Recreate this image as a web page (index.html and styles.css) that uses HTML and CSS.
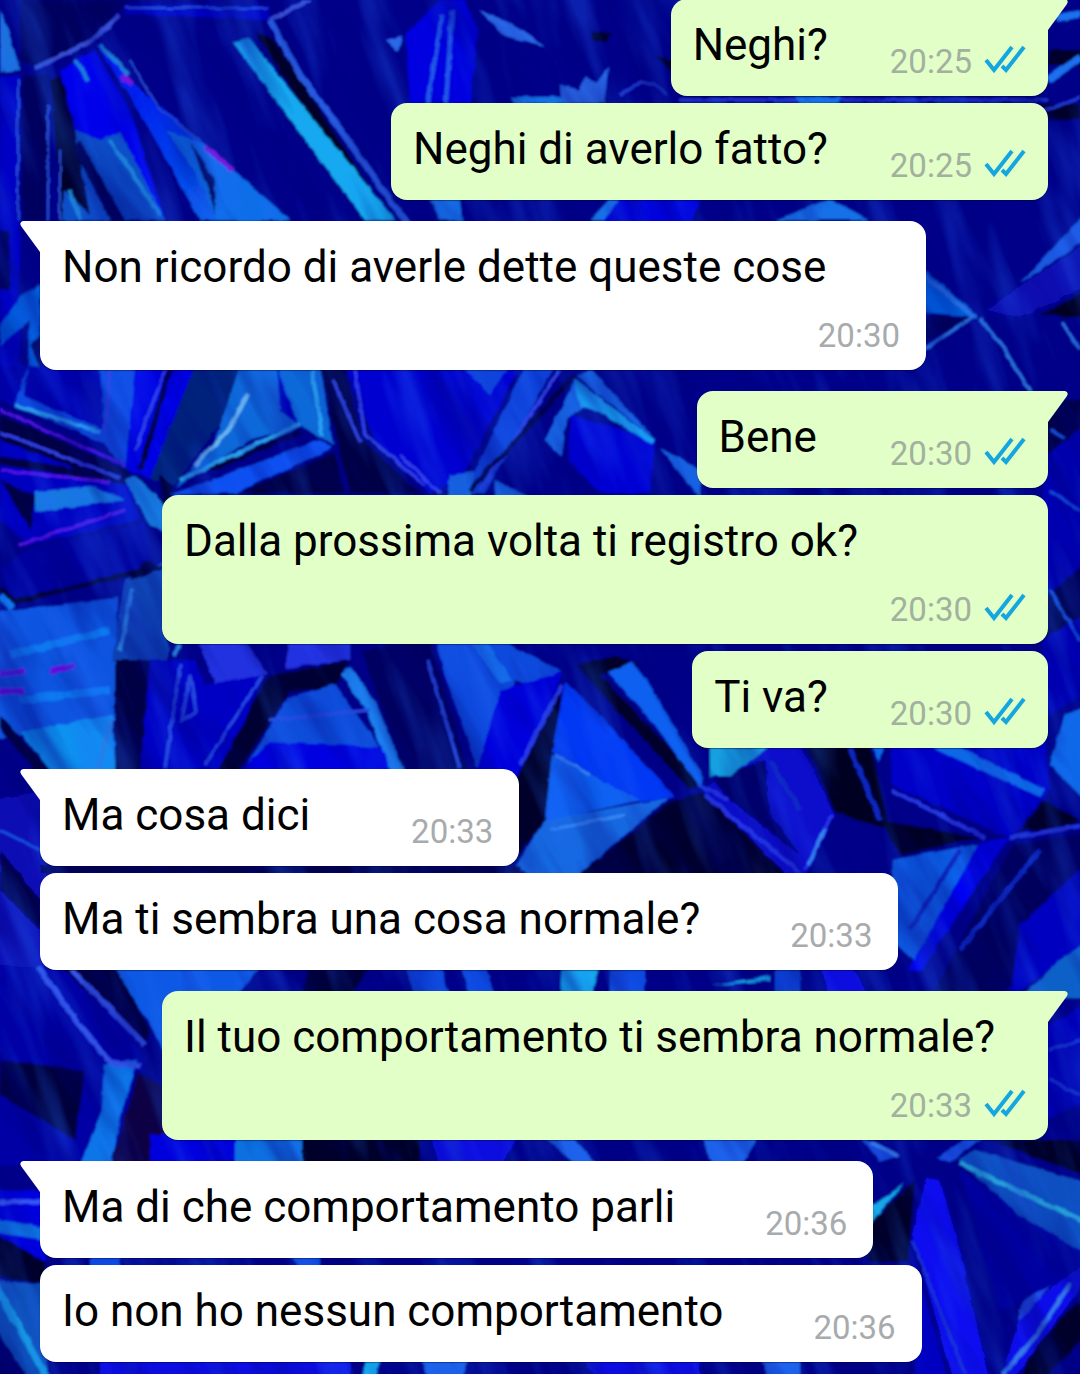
FILE: index.html
```html
<!DOCTYPE html>
<html lang="it">
<head>
    <meta charset="UTF-8" />
    <meta name="viewport" content="width=device-width, initial-scale=1.0" />
    <title>Chat</title>
    <link rel="stylesheet" href="styles.css">
</head>
<body>
    <!-- Shared shapes -->
    <svg class="defs" aria-hidden="true">
        <symbol id="checks" viewBox="0 0 42 28">
            <path d="M2 15 L10 25 L28 2 M18 21 L22 25 L40 2" fill="none" stroke="#14a6de" stroke-width="4" stroke-linejoin="miter" stroke-linecap="butt" />
        </symbol>
        <symbol id="tail-out" viewBox="0 0 21 32">
            <path d="M0 0 H18 Q22 1 20 5 L1 31 H0 Z" />
        </symbol>
        <symbol id="tail-in" viewBox="0 0 21 32">
            <path d="M21 0 H3 Q-1 1 1 5 L20 31 H21 Z" />
        </symbol>
    </svg>

    <main class="chat">
        <!-- Crystal wallpaper -->
        <svg class="wallpaper" viewBox="0 0 1080 1374" preserveAspectRatio="xMidYMin slice" aria-hidden="true">
            <defs>
                <!-- roughens the facet edges -->
                <filter id="soft" x="0" y="0" width="100%" height="100%">
                    <feTurbulence type="fractalNoise" baseFrequency="0.08" numOctaves="2" seed="4" result="noise" />
                    <feDisplacementMap in="SourceGraphic" in2="noise" scale="4" xChannelSelector="R" yChannelSelector="G" />
                    <feGaussianBlur stdDeviation="1" />
                </filter>
                <!-- light and shade inside the facets -->
                <filter id="streaks" x="0" y="0" width="100%" height="100%">
                    <feTurbulence type="fractalNoise" baseFrequency="0.03 0.006" numOctaves="3" seed="9" />
                    <feColorMatrix values="0 0 0 0 0.02  0 0 0 0 0.15  0 0 0 0 1  3 0 0 0 -1.4" />
                </filter>
                <filter id="shade" x="0" y="0" width="100%" height="100%">
                    <feTurbulence type="fractalNoise" baseFrequency="0.03 0.006" numOctaves="3" seed="21" />
                    <feColorMatrix values="0 0 0 0 0  0 0 0 0 0  0 0 0 0 0.2  3 0 0 0 -1.4" />
                </filter>
                <linearGradient id="g1" x1="0" y1="0" x2="1" y2="1"><stop offset="0" stop-color="#0000f0" /><stop offset="1" stop-color="#0a78e8" /></linearGradient>
            </defs>
            <rect width="1080" height="1374" fill="#000088" />
            <g filter="url(#soft)">
                <rect width="1080" height="1374" fill="#000088" />
                <!-- top left -->
                <path fill="#00005e" d="M20 0H130L90 40 35 68 20 60ZM22 75H50L45 220H22Z" />
                <path fill="#1a70e0" d="M0 10L8 30 20 70 0 72Z" />
                <path fill="#0000c4" d="M0 76H20V390H0ZM125 5H268L270 20 125 14Z" />
                <path fill="#02002c" d="M50 80L62 76 110 160 150 220H62ZM255 32L275 40 390 220H375Z" />
                <path fill="#0000ea" d="M60 70L95 50 130 110 165 220H150L75 130Z" />
                <path fill="#0a50c8" d="M75 130L100 140 120 132 165 220H62L64 190 90 215Z" />
                <path fill="url(#g1)" d="M95 42L130 80 200 140 290 220H200L150 130Z" />
                <path fill="#0a6ee8" d="M165 130L200 142 235 172 290 220H218L190 165Z" />
                <path fill="#02004c" d="M80 140L125 220H110L74 150ZM190 140L215 180 216 215 208 190Z" />
                <path fill="#12a8f0" d="M233 42L248 38 395 220H365Z" />
                <g fill="none">
                    <path stroke="#3a50d8" stroke-width="4" d="M35 68L90 42 120 15M270 20L310 0" />
                    <path stroke="#2a60e8" stroke-width="6" d="M270 20L300 75 330 115 408 225" />
                    <path stroke="#2848d0" stroke-width="2" d="M125 8H268M18 80V220M130 60L160 110 200 140M48 105V220M60 150V220" />
                    <path stroke="#8010e0" stroke-width="5" d="M205 147L233 170M122 76L132 84" />
                    <path stroke="#1c80d8" stroke-width="4" d="M75 60L88 80M100 45L128 75M110 140L160 215M70 190L80 220" />
                </g>
                <!-- top centre and right -->
                <path fill="#0606e0" d="M405 35L440 0H465L478 30 470 103H410Z" />
                <path fill="none" stroke="#2058e8" stroke-width="4" d="M442 15L428 103M452 10L446 103" />
                <path fill="#2a68e8" d="M478 10L512 24 545 46 505 36ZM560 85L580 90 585 76 596 84 608 68 604 103H562ZM385 40L402 36 398 52Z" />
                <path fill="#02002c" d="M590 30L612 34 606 42 592 40ZM655 55L672 60V72ZM1048 50H1080V66H1048ZM926 104H1080V120H1048Z" />
                <path fill="none" stroke="#1a70f0" stroke-width="7" d="M1056 18L1080 14M1048 80L1080 58" />
                <path fill="none" stroke="#2038d0" stroke-width="3" d="M1040 112L1080 98M620 95Q650 70 665 95M680 100H1048" />
                <path fill="#1470e8" d="M510 97H560L570 103H515ZM795 97H840V103H800ZM775 220L830 199 870 220ZM590 220L610 199 640 205V220ZM430 199H460L462 220H440Z" />
                <path fill="#0404dc" d="M620 199H700L690 225H600Z" />
                <!-- beside the third message -->
                <path fill="#0060e0" d="M22 295L40 285V370H28L30 320 0 345V325ZM920 266L978 317 920 312Z" />
                <path fill="#00005a" d="M0 230H10V290H0ZM30 345L40 335V370ZM920 316H975L920 345Z" />
                <path fill="#020024" d="M1040 315L1090 289V318Z" />
                <path fill="#1a58e0" d="M1090 208V237L1020 284Z" />
                <path fill="#0808b0" d="M985 310L1090 240V285L1020 318Z" />
                <path fill="none" stroke="#2a70e0" stroke-width="3" d="M920 352L976 315M980 318L1006 352 1030 392M1062 322L1080 350M920 272L972 316" />
                <!-- upper middle -->
                <path fill="#0000b0" d="M0 366H120L100 440 0 400Z" />
                <path fill="#0a48e0" d="M100 366H140L125 470 105 445ZM14 405L28 366 24 396 105 430 115 448Z" />
                <path fill="#0000e4" d="M135 366H205L152 480 125 468Z" />
                <path fill="#00207c" d="M195 366H275L240 395 175 485 150 478Z" />
                <path fill="#0a68d8" d="M240 366H320L333 445 300 425 250 440 175 488 215 440Z" />
                <path fill="#0000c0" d="M277 366L298 425 280 412ZM0 425L120 460 140 520 30 545 0 520Z" />
                <path fill="#030044" d="M0 415L130 470V485L0 465V455L80 470 0 440ZM240 493L335 452 345 493ZM320 366H345L362 440 420 493H350ZM160 475L175 488 162 510ZM0 480L35 496 30 530Z" />
                <path fill="#0a50f0" d="M170 495L320 440 332 448 235 493Z" />
                <path fill="#1878e0" d="M125 480L134 475 168 508V535L150 525ZM35 492L90 486 125 500 35 512Z" />
                <path fill="#0000d0" d="M345 366H440L520 366 460 480 430 493 375 440Z" />
                <path fill="#0a40d8" d="M525 366H555L485 493H465ZM462 366H510L490 395 480 385Z" />
                <path fill="#0000d4" d="M570 415L655 440 650 493H600L568 460Z" />
                <path fill="#14a0f0" d="M574 378L655 440 652 444 600 412 582 406 576 412Z" />
                <path fill="#1460e0" d="M576 376L592 370 655 440ZM574 382L580 408 566 420 562 456 545 440ZM660 448L700 470V498ZM495 480L530 498H495ZM450 475L475 472 470 498H447Z" />
                <g fill="none">
                    <path stroke="#6ab8f0" stroke-width="4" d="M248 394L232 425 195 466" />
                    <path stroke="#2aa0f0" stroke-width="4" d="M300 424L180 480M14 405L100 432M312 370L322 435" />
                    <path stroke="#3040e8" stroke-width="3" d="M0 432L120 478M355 370L365 435 425 485M400 455L440 493M333 380L360 442M110 370L105 430M165 370L135 450M560 370L480 490" />
                    <path stroke="#5018e8" stroke-width="3" d="M0 410L125 465M0 470L110 482M20 545L125 510" />
                    <path stroke="#030044" stroke-width="5" d="M210 470L300 432M170 370L140 470M60 550L140 525M575 375L470 490" />
                </g>
                <!-- left middle -->
                <path fill="#00009c" d="M30 548L145 522 152 570 15 600 0 570Z" />
                <path fill="#0a54e0" d="M-8 612L118 598 114 720 -8 740V650Z" />
                <path fill="#1040b0" d="M125 580L168 560V662H112Z" />
                <path fill="#0a90f0" d="M20 732L112 715 116 776H55Z" />
                <path fill="#020044" d="M0 715L55 776H40L0 730ZM115 660H200L165 776H115ZM145 560L168 568 130 580Z" />
                <g fill="none">
                    <path stroke="#030030" stroke-width="5" d="M15 602L145 570M0 588L15 602" />
                    <path stroke="#0a78f0" stroke-width="8" d="M0 595L12 608M10 655L110 630M20 700L110 690" />
                    <path stroke="#2a80e0" stroke-width="4" d="M132 590L120 650M175 655L180 644M112 718L98 768" />
                    <path stroke="#6a10e8" stroke-width="6" d="M0 674L25 671M50 672L75 666M0 691H24" />
                </g>
                <path fill="#0000c4" d="M150 660H195L205 685 262 675 225 776H140Z" />
                <path fill="#2430e0" d="M198 640H245L268 674 215 684ZM290 640H350V660L285 668Z" />
                <path fill="#030030" d="M268 676L350 660 335 686 290 692 235 776H215Z" />
                <path fill="#0a4cd8" d="M288 698L335 684 400 776H240Z" />
                <path fill="#0000e0" d="M235 776L270 742 400 748V776Z" />
                <path fill="#000060" d="M362 650L430 640 470 776H405Z" />
                <path fill="none" stroke="#1a80f0" stroke-width="12" d="M345 670L370 705 400 776" />
                <path fill="none" stroke="#2848e0" stroke-width="3" d="M190 675L182 720 196 712ZM262 676L205 765M180 665L165 768M428 660L460 768M270 720L370 710" />
                <!-- centre -->
                <path fill="#1048dc" d="M435 640H500L562 672 540 690 515 680 480 776 445 675Z" />
                <path fill="#0606dc" d="M500 690L562 672 520 776H475Z" />
                <path fill="#1470f0" d="M470 640H485L512 680 500 684Z" />
                <path fill="#04002c" d="M556 700L562 690 545 820 515 860V780ZM575 665L615 655 640 665 600 675 705 785 690 790Z" />
                <path fill="#0638f4" d="M565 682L600 715 675 797 640 802 552 752Z" />
                <path fill="#0a60f0" d="M552 755L640 800 545 822Z" />
                <path fill="#1868e0" d="M515 866L545 820 668 798 575 878H535Z" />
                <path fill="#0a60f0" d="M608 672L632 662 650 685 703 776 700 788 655 725Z" />
                <path fill="#06002e" d="M575 878L670 802 702 792 745 830 790 878Z" />
                <path fill="#0808cc" d="M702 790L760 742H800L835 815 805 878H790Z" />
                <path fill="#000068" d="M712 780L765 760 770 815 800 855 730 800Z" />
                <path fill="#14a0e0" d="M710 742H775L730 776H710Z" />
                <path fill="#020024" d="M805 742H870L890 830 835 812ZM880 820L980 838 900 855ZM1045 800L1080 820 1060 830H1020Z" />
                <path fill="#0404c8" d="M890 742H1045L1050 790 1010 838 892 785Z" />
                <path fill="#0a68e8" d="M920 742H950L1045 790 1040 797ZM870 742H885L880 762ZM1065 715L1090 705V805L1050 765Z" />
                <path fill="#0a60e8" d="M892 860L978 844 918 965 892 940Z" />
                <path fill="#0404f4" d="M980 842L1008 838 922 970H908Z" />
                <path fill="#00005c" d="M1012 845L1090 832V900L1000 998H930Z" />
                <path fill="#0000c0" d="M1020 925L1090 860V940L1010 998Z" />
                <path fill="#0a60c8" d="M1060 960L1090 940V998H1020Z" />
                <g fill="none">
                    <path stroke="#2838e8" stroke-width="4" d="M562 685L520 765M705 795L800 872M832 815L806 870M892 790L985 838M1010 838L1080 826M700 785L728 800" />
                    <path stroke="#3888f0" stroke-width="3" d="M555 755L590 775M825 830L808 865M550 830L625 815M1048 700L1080 690" />
                    <path stroke="#0828c0" stroke-width="5" d="M960 850L910 930M850 748L880 820M770 760L800 810M1040 850L960 950" />
                </g>
                <path fill="#0808b4" d="M-8 800L46 790V998H-8Z" />
                <path fill="#00004c" d="M0 850L40 900V930L0 890ZM40 866H521V873H40ZM1042 400H1090V640H1042Z" />
                <path fill="#0000b0" d="M1042 460L1090 420V560L1042 600ZM1042 640L1090 610V690L1042 720Z" />
                <path fill="none" stroke="#1650e0" stroke-width="3" d="M1050 430L1064 438M1050 490L1080 510M1050 590L1080 640M0 830L40 850" />
                <!-- lower left -->
                <path fill="#0000a4" d="M-8 966H100L145 1060 110 1165H-8Z" />
                <path fill="#0a58e4" d="M108 966H260L235 998H168V1060L148 1020Z" />
                <path fill="#02003c" d="M60 966H115L150 1030 145 1045ZM310 966H370L350 998H300ZM0 1060L85 1070 75 1140 0 1095Z" />
                <path fill="#0a74e8" d="M104 1064L137 1060 122 1110 110 1170H78L102 1110Z" />
                <path fill="#080044" d="M137 1072L168 1090V1170H110Z" />
                <path fill="#0404dc" d="M150 1134H235V1168H150ZM-8 1190H46V1262H20L-8 1235Z" />
                <path fill="#0a70e0" d="M235 1134H302V1168H235ZM-8 1218L46 1228V1240L-8 1232Z" />
                <path fill="#02002c" d="M302 1134H420V1168H302ZM-8 1232L46 1262V1285L-8 1275Z" />
                <path fill="#0a50b8" d="M-8 1280L46 1285V1384H-8Z" />
                <path fill="#00006c" d="M-8 1322L32 1384H-8Z" />
                <path fill="none" stroke="#129ae0" stroke-width="7" d="M-4 1286L50 1384" />
                <path fill="none" stroke="#3858f4" stroke-width="5" d="M38 966L75 1020 110 1062 140 1066M70 968L145 1045M0 1202H40" />
                <!-- lower strips between messages -->
                <path fill="#0a48e0" d="M405 964H440L450 998H415ZM610 964H645V998H610ZM460 964H485L495 998H470ZM775 964H800V998H775ZM90 1254H120V1268H90ZM290 1254H320V1268H300Z" />
                <path fill="#12a8f0" d="M562 964H600L590 998H560ZM712 985L770 976V981ZM360 1384L368 1356H380L375 1384Z" />
                <path fill="#0a0ae0" d="M100 1356H350V1384H100ZM430 1134H520L500 1168H440ZM580 1356H700V1384H600ZM820 964H850L870 998H830Z" />
                <path fill="#1a60e8" d="M540 1134H570L600 1168H580ZM700 1134H760L740 1168H715ZM420 1356H470L460 1384H430ZM760 1356H800V1384H770Z" />
                <!-- lower right -->
                <path fill="#0000b8" d="M1042 1030L1090 1000V1100L1042 1120Z" />
                <path fill="#1448dc" d="M860 1136L900 1155 880 1162ZM937 1158L968 1136H985L950 1162Z" />
                <path fill="#0000a0" d="M960 1170L1090 1255 1070 1280 1000 1310Z" />
                <path fill="#0a50c0" d="M958 1160L975 1150 1090 1184V1256L1020 1215Z" />
                <path fill="#06002c" d="M990 1140H1090V1178ZM868 1225L915 1180 908 1262 868 1262ZM1030 1350L1090 1290V1330L1040 1384H1020Z" />
                <path fill="#0c0cf0" d="M926 1178L940 1180 960 1250 990 1384H955L912 1235Z" />
                <path fill="#0404c0" d="M910 1245L950 1384H915V1270Z" />
                <path fill="#12a8e8" d="M870 1208L905 1182 870 1224Z" />
                <path fill="#1010ec" d="M1000 1384L1022 1310 1090 1260V1275L1010 1384Z" />
                <path fill="#2050e8" d="M1018 1322L1022 1302 1050 1285 1030 1310Z" />
                <path fill="none" stroke="#28a0d8" stroke-width="5" d="M960 1163L1020 1192 1090 1224" />
                <path fill="none" stroke="#3878e8" stroke-width="4" d="M1003 1374L1036 1336 1070 1284M870 1142L898 1156" />
                <path fill="none" stroke="#1a30d0" stroke-width="3" d="M912 1240L965 1374M1049 1050L1080 1040M1049 1080L1080 1095" />
            </g>
            <rect x="-500" y="-500" width="2100" height="2400" transform="rotate(-20 540 687)" filter="url(#streaks)" opacity=".3" />
            <rect x="-500" y="-500" width="2100" height="2400" transform="rotate(-30 540 687)" filter="url(#shade)" opacity=".4" />
        </svg>

        <ol class="messages">
            <li class="message out first">
                <svg class="tail" aria-hidden="true"><use href="#tail-out" /></svg>
                <p class="text">Neghi?</p>
                <div class="meta"><time>20:25</time><svg class="checks" role="img" aria-label="Letto"><use href="#checks" /></svg></div>
            </li>
            <li class="message out">
                <p class="text">Neghi di averlo fatto?</p>
                <div class="meta"><time>20:25</time><svg class="checks" role="img" aria-label="Letto"><use href="#checks" /></svg></div>
            </li>
            <li class="message in first">
                <svg class="tail" aria-hidden="true"><use href="#tail-in" /></svg>
                <p class="text">Non ricordo di averle dette queste cose</p>
                <div class="meta"><time>20:30</time></div>
            </li>
            <li class="message out first">
                <svg class="tail" aria-hidden="true"><use href="#tail-out" /></svg>
                <p class="text">Bene&nbsp;</p>
                <div class="meta"><time>20:30</time><svg class="checks" role="img" aria-label="Letto"><use href="#checks" /></svg></div>
            </li>
            <li class="message out">
                <p class="text">Dalla prossima volta ti registro ok?</p>
                <div class="meta"><time>20:30</time><svg class="checks" role="img" aria-label="Letto"><use href="#checks" /></svg></div>
            </li>
            <li class="message out">
                <p class="text">Ti va?</p>
                <div class="meta"><time>20:30</time><svg class="checks" role="img" aria-label="Letto"><use href="#checks" /></svg></div>
            </li>
            <li class="message in first">
                <svg class="tail" aria-hidden="true"><use href="#tail-in" /></svg>
                <p class="text">Ma cosa dici&nbsp;</p>
                <div class="meta"><time>20:33</time></div>
            </li>
            <li class="message in">
                <p class="text">Ma ti sembra una cosa normale?</p>
                <div class="meta"><time>20:33</time></div>
            </li>
            <li class="message out first">
                <svg class="tail" aria-hidden="true"><use href="#tail-out" /></svg>
                <p class="text">Il tuo comportamento ti sembra normale?</p>
                <div class="meta"><time>20:33</time><svg class="checks" role="img" aria-label="Letto"><use href="#checks" /></svg></div>
            </li>
            <li class="message in first">
                <svg class="tail" aria-hidden="true"><use href="#tail-in" /></svg>
                <p class="text">Ma di che comportamento parli</p>
                <div class="meta"><time>20:36</time></div>
            </li>
            <li class="message in">
                <p class="text">Io non ho nessun comportamento</p>
                <div class="meta"><time>20:36</time></div>
            </li>
        </ol>
    </main>
</body>
</html>
```

FILE: styles.css
```css
* {
    box-sizing: border-box;
}
body {
    margin: 0;
    background: #000088;
    font-family: Roboto, "Liberation Sans", sans-serif;
}
.defs {
    position: absolute;
    width: 0;
    height: 0;
}
.chat {
    position: relative;
    min-height: 100vh;
    overflow: hidden;
}
.wallpaper {
    position: absolute;
    top: 0;
    left: 0;
    width: 100%;
    height: 100%;
}
.messages {
    position: relative;
    display: flex;
    flex-direction: column;
    margin: -1px 0 0;
    padding: 0 32px 12px 40px;
    list-style: none;
}
.message {
    position: relative;
    display: flex;
    flex-wrap: wrap;
    max-width: calc(100% - 122px);
    margin-top: 7px;
    padding: 20px 26px 14px 22px;
    border-radius: 16px;
    box-shadow: 0 1px 1px rgba(0, 0, 40, 0.4);
}
.message.first {
    margin-top: 21px;
}
.message:first-child {
    margin-top: 0;
}
.in {
    align-self: flex-start;
    column-gap: 90px;
    background: #ffffff;
    fill: #ffffff;
}
.out {
    align-self: flex-end;
    column-gap: 62px;
    padding-right: 22px;
    background: #e1ffc7;
    fill: #e1ffc7;
}
.in.first {
    border-top-left-radius: 0;
}
.out.first {
    border-top-right-radius: 0;
}
.tail {
    position: absolute;
    top: 0;
    width: 21px;
    height: 32px;
}
.in .tail {
    left: -20px;
}
.out .tail {
    right: -20px;
}
.text {
    margin: 0;
    color: #000000;
    font-size: 44px;
    line-height: 52px;
}
.meta {
    display: flex;
    align-items: flex-end;
    gap: 12px;
    min-height: 63px;
    margin-left: auto;
    color: #a8abad;
    font-size: 33px;
    line-height: 40px;
}
.out .meta {
    color: #a3b0a0;
}
.checks {
    width: 42px;
    height: 28px;
    margin-bottom: 9px;
}
```
